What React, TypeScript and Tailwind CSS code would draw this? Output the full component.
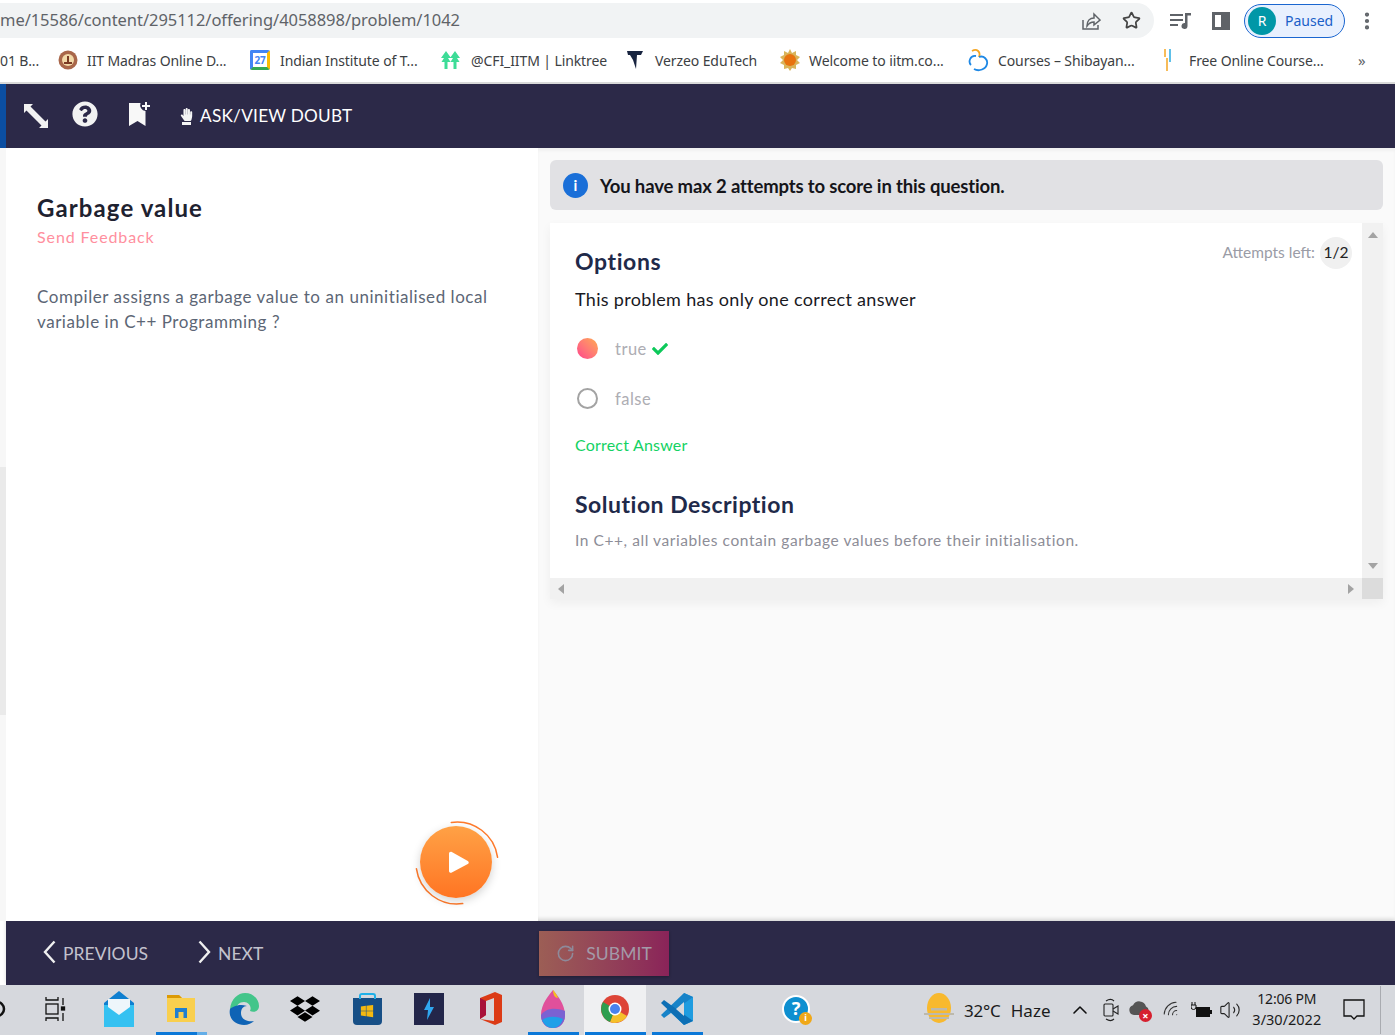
import { ReactNode } from "react";
import { FaCheck, FaHandPaper, FaQuestionCircle, FaDropbox, FaWindows } from "react-icons/fa";
import { Star, ChevronUp, RotateCw, MoreVertical, Volume2, Wifi } from "lucide-react";

const appFont = { fontFamily: "Lato, 'Noto Sans', sans-serif" };

const Bookmark = ({ width, icon, label }: { width: string; icon: ReactNode; label: string }) => (
  <div className={`${width} flex items-center shrink-0`}>
    {icon}
    <span className="whitespace-nowrap">{label}</span>
  </div>
);

const Slot = ({ children, active, bg }: { children: ReactNode; active?: string; bg?: string }) => (
  <div className={`w-[62px] h-[50px] shrink-0 flex flex-col items-center ${bg || ""}`}>
    <div className="flex-1 flex items-center justify-center">{children}</div>
    <div className={`h-[3px] ${active || "w-full"}`} />
  </div>
);

const BrowserBar = () => (
  <div className="h-[84px] bg-white shrink-0 border-b-2 border-[#d9d9d9]" style={{ fontFamily: "'Noto Sans', sans-serif" }}>
    <div className="h-[38px] pt-[3px] flex items-stretch">
      <div className="w-[1154px] bg-[#f1f3f4] rounded-r-full flex items-center justify-between pr-[13px] shrink-0">
        <span className="text-[16.500px] tracking-[-0.05px] text-[#5f6368] whitespace-nowrap">me/15586/content/295112/offering/4058898/problem/1042</span>
        <div className="flex items-center gap-[21px]">
          <svg width="20" height="20" viewBox="0 0 20 20" fill="none" stroke="#5f6368" strokeWidth="1.5">
            <path d="M2 9v9h15v-4" />
            <path d="M6 15c0-5 3-8 7-8V3l6 6-6 5V11c-3 0-5 1-7 4z" />
          </svg>
          <Star size={19} strokeWidth={2.2} color="#444" />
        </div>
      </div>
      <div className="flex items-center ml-[16px]">
        <svg width="22" height="18" viewBox="0 0 22 18" fill="#5f6368">
          <path d="M0 2h13v2H0zM0 7h13v2H0zM0 12h8v2H0zM15 1h6v2.500h-3.500V14a3 3 0 1 1-2.500-3z" />
        </svg>
        <div className="w-[18px] h-[18px] border-[3px] border-r-[9px] border-[#5f6368] ml-[20px]" />
        <div className="w-[101px] h-[34px] ml-[14px] rounded-full border border-[#1a66d0] bg-[#e8f0fe] flex items-center pl-[3px]">
          <div className="w-[28px] h-[28px] rounded-full bg-[#0097a7] text-white text-[14px] flex items-center justify-center">R</div>
          <span className="text-[14px] text-[#1a5fc8] ml-[9px]">Paused</span>
        </div>
        <MoreVertical size={22} strokeWidth={2.6} color="#5f6368" className="ml-[11px]" />
      </div>
    </div>
    <div className="h-[44px] flex items-center text-[14px] tracking-[-0.1px] text-[#3c4043]">
      <Bookmark width="w-[58px]" icon={null} label="01 B..." />
      <Bookmark
        width="w-[192px]"
        icon={
          <svg width="20" height="20" viewBox="0 0 20 20" className="mr-[9px] shrink-0">
            <circle cx="10" cy="10" r="9.500" fill="#a9674a" />
            <circle cx="10" cy="10" r="6" fill="#f2d9a8" />
            <path d="M6 12h8v2H6zM9 6h2v6H9z" fill="#7b3b24" />
          </svg>
        }
        label="IIT Madras Online D..."
      />
      <Bookmark
        width="w-[190px]"
        icon={
          <div className="w-[20px] h-[20px] mr-[10px] shrink-0 rounded-[2px] border-t-[3px] border-l-[3px] border-[#4285f4] border-b-[3px] border-b-[#34a853] border-r-[3px] border-r-[#fbbc04] bg-white text-[10px] font-bold text-[#4285f4] flex items-center justify-center leading-none">
            27
          </div>
        }
        label="Indian Institute of T..."
      />
      <Bookmark
        width="w-[187px]"
        icon={
          <svg width="21" height="20" viewBox="0 0 21 20" fill="#3ddc97" className="mr-[10px] shrink-0">
            <path d="M6 1l5 7H8l2.500 4H7.500V19h-3v-7H1.500L4 8H1zM15 1l5 7h-3l2.500 4h-3V19h-3v-7h-3L13 8h-3z" />
          </svg>
        }
        label="@CFI_IITM | Linktree"
      />
      <Bookmark
        width="w-[153px]"
        icon={
          <svg width="17" height="20" viewBox="0 0 17 20" fill="#182440" className="mr-[11px] shrink-0">
            <path d="M0 1h16l-2 4h-4l-1 14-3-9L3 5H1z" />
          </svg>
        }
        label="Verzeo EduTech"
      />
      <Bookmark
        width="w-[188px]"
        icon={
          <svg width="20" height="22" viewBox="0 0 20 22" className="mr-[9px] shrink-0">
            <path d="M10 0l2 4 4-2 0 4 4 2-3 3 3 3-4 2v4l-4-1-2 3-2-3-4 1v-4l-4-2 3-3-3-3 4-2 0-4 4 2z" fill="#d9b45a" />
            <circle cx="10" cy="11" r="6" fill="#e8730f" />
          </svg>
        }
        label="Welcome to iitm.co..."
      />
      <Bookmark
        width="w-[194px]"
        icon={
          <svg width="21" height="24" viewBox="0 0 21 24" fill="none" strokeWidth="1.800" className="mr-[9px] shrink-0">
            <path d="M4 3c5-3 9 1 7 6" stroke="#f5a623" />
            <path d="M11 9c5-2 9 3 8 7-1 5-8 8-13 5" stroke="#1e88e5" />
            <path d="M8 8c-6-1-8 6-5 9" stroke="#1e88e5" />
          </svg>
        }
        label="Courses – Shibayan..."
      />
      <Bookmark
        width="w-[201px]"
        icon={
          <svg width="13" height="24" viewBox="0 0 13 24" fill="none" strokeWidth="1.500" className="mr-[14px] shrink-0">
            <path d="M3 1v8M5 10v13" stroke="#f5a623" />
            <path d="M8 1v13" stroke="#29abe2" />
          </svg>
        }
        label="Free Online Course..."
      />
      <span className="text-[15px] text-[#5f6368] -ml-[5px]">»</span>
    </div>
  </div>
);

const NavBar = () => (
  <div className="h-[64px] bg-[#2c2948] shrink-0 flex items-center border-l-[6px] border-[#0b4ea2] text-white" style={appFont}>
    <svg width="26" height="26" viewBox="0 0 26 26" fill="#f2f2f2" className="ml-[17px] shrink-0">
      <path d="M1 1h9L7.500 3.500 22.500 18.500 25 16v9h-9l2.500-2.500L3.500 7.500 1 10z" />
    </svg>
    <FaQuestionCircle size={26} color="#f2f2f2" className="ml-[23px] -mt-[4px] shrink-0" />
    <svg width="22" height="24" viewBox="0 0 22 24" fill="#f8f8f8" className="ml-[30px] -mt-[4px] shrink-0">
      <path d="M1 1h11.500a6 6 0 0 0 5 8V24l-8-5-8.500 5z" />
      <path d="M17 0h2v3h3v2h-3v3h-2V5h-3V3h3z" />
    </svg>
    <div className="ml-[30px] flex flex-col items-center shrink-0">
      <FaHandPaper size={13} color="#f5f5f5" />
      <div className="w-[9px] h-[3px] bg-[#f5f5f5] mt-[1px]" />
    </div>
    <span className="text-[17.200px] ml-[7px] tracking-[0.25px] whitespace-nowrap">ASK/VIEW DOUBT</span>
  </div>
);

const PlayButton = () => (
  <div className="absolute left-[415px] top-[673px] w-[84px] h-[84px]">
    <svg width="84" height="84" viewBox="0 0 84 84" fill="none" className="absolute inset-0" strokeWidth="1.500" strokeLinecap="round" stroke="#ff7a2b">
      <path d="M42 1a41 41 0 0 1 41 41" transform="rotate(-8 42 42)" />
      <path d="M42 83A41 41 0 0 1 1 42" transform="rotate(-8 42 42)" />
    </svg>
    <div className="absolute left-[5px] top-[5px] w-[72px] h-[72px] rounded-full bg-gradient-to-b from-[#ffa145] to-[#ff7422] shadow-[0_3px_10px_rgba(0,0,0,0.18)] flex items-center justify-center">
      <svg width="24" height="24" viewBox="0 0 24 24" fill="#fff" className="ml-[3px]">
        <path d="M3 3.500c0-1.500 1.500-2.300 2.800-1.600l16 9c1.300.7 1.300 2.500 0 3.200l-16 8.500C4.500 23.300 3 22.500 3 21z" />
      </svg>
    </div>
  </div>
);

const QuestionPanel = () => (
  <div className="w-[538px] shrink-0 flex relative bg-white">
    <div className="w-[6px] shrink-0 flex flex-col">
      <div className="h-[319px] bg-[#f7f7f7]" />
      <div className="h-[248px] bg-[#eaeaea]" />
      <div className="flex-1 bg-[#f7f7f7]" />
    </div>
    <div className="pl-[31px] pr-[30px] pt-[45px] flex-1">
      <h1 className="text-[24px] leading-[30px] font-bold tracking-[1.1px] text-[#1e2230]">Garbage value</h1>
      <a className="block text-[16px] leading-[20px] mt-[4px] tracking-[0.9px] text-[#ff8f9e]">Send Feedback</a>
      <p className="text-[17px] leading-[25px] text-[#5c6675] mt-[37px] tracking-[0.55px]">
        Compiler assigns a garbage value to an uninitialised local variable in C++ Programming ?
      </p>
    </div>
    <PlayButton />
  </div>
);

const AnswerPanel = () => (
  <div className="flex-1 bg-[#fafafa] pt-[12px] pl-[12px] pr-[12px] shadow-[inset_0_3px_3px_rgba(0,0,0,0.04)]">
    <div className="h-[50px] rounded-[6px] bg-[#e1e1e4] flex items-center pl-[13px]">
      <div className="w-[25px] h-[25px] rounded-full bg-[#1a6fd8] text-white text-[15px] font-bold flex items-center justify-center">i</div>
      <span className="text-[18.500px] font-bold tracking-[-0.15px] text-[#15151a] ml-[12px] pt-[3px]">You have max 2 attempts to score in this question.</span>
    </div>
    <div className="mt-[13px] h-[376px] flex flex-col bg-[#f1f1f1] shadow-[0_4px_10px_rgba(0,0,0,0.05)]">
      <div className="h-[355px] flex">
        <div className="flex-1 bg-white relative pl-[25px] pt-[23px]">
          <div className="absolute right-[10px] top-[14px] flex items-center gap-[5px]">
            <span className="text-[15.500px] text-[#9a9ca6]">Attempts left:</span>
            <span className="w-[32px] h-[32px] rounded-full bg-[#f0f0f0] text-[15.500px] text-[#222] flex items-center justify-center">1/2</span>
          </div>
          <h2 className="text-[23px] leading-[30px] font-bold tracking-[0.6px] text-[#1f2a4a]">Options</h2>
          <p className="text-[18px] leading-[24px] mt-[11px] tracking-[0.32px] text-[#1a1a1f]">This problem has only one correct answer</p>
          <div className="flex items-center mt-[26px] h-[24px]">
            <div className="w-[21px] h-[21px] ml-[2px] -mt-[2px] rounded-full bg-gradient-to-bl from-[#ffa94d] to-[#ff3d8b]" />
            <span className="text-[16.500px] tracking-[0.5px] text-[#adadb3] ml-[17px]">true</span>
            <FaCheck size={16} color="#0cc95a" className="ml-[5px]" />
          </div>
          <div className="flex items-center mt-[26px] h-[24px]">
            <div className="w-[21px] h-[21px] ml-[2px] -mt-[2px] rounded-full border-2 border-[#a3a3a3]" />
            <span className="text-[16.500px] tracking-[0.5px] text-[#adadb3] ml-[17px]">false</span>
          </div>
          <p className="text-[16px] leading-[22px] mt-[23px] tracking-[0.2px] text-[#14d263]">Correct Answer</p>
          <h2 className="text-[23px] leading-[30px] font-bold tracking-[0.5px] text-[#1f2a4a] mt-[33px]">Solution Description</h2>
          <p className="text-[15.500px] leading-[22px] mt-[10px] tracking-[0.57px] text-[#8d8d97]">In C++, all variables contain garbage values before their initialisation.</p>
        </div>
        <div className="w-[21px] flex flex-col items-center justify-between py-[9px]">
          <div className="w-0 h-0 border-x-[5px] border-x-transparent border-b-[6px] border-b-[#a3a3a3]" />
          <div className="w-0 h-0 border-x-[5px] border-x-transparent border-t-[6px] border-t-[#a3a3a3]" />
        </div>
      </div>
      <div className="h-[21px] flex">
        <div className="flex-1 flex items-center justify-between px-[8px]">
          <div className="w-0 h-0 border-y-[5px] border-y-transparent border-r-[6px] border-r-[#a3a3a3]" />
          <div className="w-0 h-0 border-y-[5px] border-y-transparent border-l-[6px] border-l-[#a3a3a3]" />
        </div>
        <div className="w-[21px] bg-[#dcdcdc]" />
      </div>
    </div>
  </div>
);

const FooterBar = () => (
  <div className="h-[64px] shrink-0 bg-white pl-[6px]" style={appFont}>
    <div className="h-full bg-[#2c2948] flex items-center shadow-[0_-2px_4px_rgba(0,0,0,0.15)]">
      <svg width="13" height="24" viewBox="0 0 13 24" fill="none" stroke="#f0f0f0" strokeWidth="2.400" className="ml-[37px] -mt-[2px] shrink-0">
        <path d="M11.500 1.500L2 12l9.500 10.500" />
      </svg>
      <span className="text-[17.500px] text-[#c3c2cd] ml-[7px] mt-[2px] tracking-[0.05px]">PREVIOUS</span>
      <svg width="13" height="24" viewBox="0 0 13 24" fill="none" stroke="#f0f0f0" strokeWidth="2.400" className="ml-[50px] -mt-[2px] shrink-0">
        <path d="M1.500 1.500L11 12 1.500 22.500" />
      </svg>
      <span className="text-[17.500px] text-[#c3c2cd] ml-[7px] mt-[2px]">NEXT</span>
      <div className="w-[130px] h-[45px] ml-[276px] mt-[1px] bg-gradient-to-r from-[#9c5e55] to-[#8a2359] flex items-center shadow-[0_1px_3px_rgba(0,0,0,0.3)]">
        <RotateCw size={19} strokeWidth={2} color="#8e8a9a" className="ml-[17px]" />
        <span className="text-[17.500px] text-[#a39aa8] ml-[11px] mt-[2px] tracking-[0.1px]">SUBMIT</span>
      </div>
    </div>
  </div>
);

const TaskBar = () => (
  <div className="h-[50px] shrink-0 bg-[#d6d8dd] flex items-center text-[#1b1b1b]" style={{ fontFamily: "'Noto Sans', sans-serif" }}>
    <svg width="6" height="18" viewBox="0 0 6 18" fill="none" stroke="#111" strokeWidth="2.500" className="shrink-0 mb-[3px]">
      <circle cx="-3" cy="9" r="7" />
    </svg>
    <div className="w-[20px] shrink-0" />
    <Slot>
      <svg width="22" height="26" viewBox="0 0 22 26" fill="none" stroke="#111" strokeWidth="1.300" className="-ml-[4px]">
        <path d="M2 1v3h12V1M2 25v-3h12v3" />
        <rect x="2" y="8" width="12" height="10" />
        <path d="M19 2v7M19 17v8" />
        <rect x="17.500" y="11" width="3" height="3" fill="#111" />
      </svg>
    </Slot>
    <Slot>
      <svg width="30" height="36" viewBox="0 0 30 36">
        <path d="M0 12L15 0l15 12v24H0z" fill="#0f7fd0" />
        <path d="M0 14h30v22H0z" fill="#35c1f1" />
        <path d="M4 8h22v8l-11 8-11-8z" fill="#eef6fb" />
      </svg>
    </Slot>
    <Slot active="w-[51px] bg-gradient-to-r from-[#0b78d8] from-[80%] to-[#64aee8] to-[80%]">
      <svg width="30" height="30" viewBox="0 0 30 30">
        <path d="M1 1h12l3 3h13v24H1z" fill="#f9cf4e" />
        <path d="M1 1h12l3 3H1z" fill="#dc9a05" />
        <path d="M9 24V14h12v10h-3.500v-6h-5v6z" fill="#1f7fd0" />
      </svg>
    </Slot>
    <Slot>
      <svg width="31" height="32" viewBox="0 0 31 32">
        <path d="M2 16C3 6 10 0 17 0c8 0 14 6 14 13 0 5-5 7-9 5 2-4-1-9-6-9-5 0-7 3-8 7z" fill="#43c58a" />
        <path d="M2 16c-2 9 5 16 14 16 4 0 8-2 10-4-6 1-13-1-13-8 0-4 2-7 6-7-8-3-15 1-17 3z" fill="#0f63b5" />
      </svg>
    </Slot>
    <Slot>
      <FaDropbox size={30} color="#000" />
    </Slot>
    <Slot>
      <div className="relative w-[29px] h-[27px] mt-[5px] rounded-b-[4px] bg-[#174f86] flex items-center justify-center">
        <div className="absolute -top-[5px] left-[6px] w-[17px] h-[6px] border-2 border-b-0 border-[#1fb0e8] rounded-t-[3px]" />
        <FaWindows size={14} color="#f5b90f" />
      </div>
    </Slot>
    <Slot>
      <div className="w-[30px] h-[32px] bg-[#23264a] flex items-center justify-center">
        <svg width="10" height="22" viewBox="0 0 10 22" fill="#2fa7f0">
          <path d="M6 0L0 12h4l-1 10 7-13H6z" />
        </svg>
      </div>
    </Slot>
    <Slot>
      <svg width="24" height="33" viewBox="0 0 24 33">
        <path d="M1 6L16 0l7 3v27l-7 3L1 27l14 2V6l-8 3v14l-6 4z" fill="#dc3b16" />
        <path d="M1 27V6l6 3v14z" fill="#a8123a" />
      </svg>
    </Slot>
    <Slot active="w-[51px] bg-[#0b78d8]">
      <svg width="24" height="38" viewBox="0 0 24 38">
        <path d="M12 0c4 5 12 14 12 25 0 8-5 13-12 13S0 33 0 25C0 14 8 5 12 0z" fill="#e0509b" />
        <path d="M0 25c5-7 14-8 24-4 0 1 0 3 0 4 0 8-5 13-12 13S0 33 0 25z" fill="#7b62d2" />
        <path d="M1 30c6-4 14-4 21-1-2 6-6 9-10 9-5 0-9-3-11-8z" fill="#1fa0e8" />
        <path d="M12 0c2 2 4 5 5 8-3 0-5-3-5-8z" fill="#f6c21c" />
      </svg>
    </Slot>
    <Slot active="w-[61px] bg-[#0b78d8]" bg="bg-[#eff0f2]">
      <svg width="28" height="28" viewBox="0 0 28 28">
        <circle cx="14" cy="14" r="14" fill="#dd4437" />
        <path d="M14 14L26 21A14 14 0 0 1 9 27z" fill="#f5c02b" />
        <path d="M14 14L9 27A14 14 0 0 1 2 7z" fill="#2f9e4f" />
        <circle cx="14" cy="14" r="6.500" fill="#fff" />
        <circle cx="14" cy="14" r="5" fill="#4a82ee" />
      </svg>
    </Slot>
    <Slot active="w-[51px] bg-[#0b78d8]">
      <svg width="32" height="32" viewBox="0 0 32 32">
        <path d="M23 0l9 4v24l-9 4-15-14 15-11z" fill="#1f9ce0" />
        <path d="M23 0L0 22l3 3L32 4z" fill="#1783c8" />
        <path d="M0 10l3-3 29 21-9 4z" fill="#0d6fb5" />
        <path d="M23 9v14l-8-7z" fill="#d6d8dd" />
      </svg>
    </Slot>
    <div className="ml-[74px] relative w-[30px] h-[30px] shrink-0 mb-[1px]">
      <div className="w-[28px] h-[28px] rounded-full bg-[#0e8fd0] border-[2px] border-white text-white text-[18px] font-bold flex items-center justify-center">?</div>
      <div className="absolute right-0 bottom-0 w-[13px] h-[13px] rounded-full bg-[#f0a818] text-white text-[9px] font-bold flex items-center justify-center">i</div>
    </div>
    <svg width="30" height="32" viewBox="0 0 30 32" className="ml-[112px] shrink-0 mb-[3px]">
      <ellipse cx="15" cy="15" rx="12" ry="15" fill="#f8b92e" />
      <path d="M0 20h30v2H0zM7 15h16v2.500H7zM5 24h20v2H5z" fill="#bdb9ac" />
    </svg>
    <span className="text-[17px] tracking-[-0.2px] ml-[10px] mt-[2px] whitespace-nowrap">32°C</span>
    <span className="text-[17px] tracking-[0.1px] ml-[10px] mt-[2px] whitespace-nowrap">Haze</span>
    <ChevronUp size={24} strokeWidth={1.6} color="#111" className="ml-[17px] shrink-0" />
    <svg width="16" height="24" viewBox="0 0 16 24" fill="none" stroke="#222" strokeWidth="1.100" className="ml-[11px] shrink-0">
      <path d="M3 3c3-2 6-2 8 0M3 21c3 2 6 2 8 0" />
      <rect x="1" y="6" width="9" height="12" rx="1" />
      <path d="M10 11l5-3v8l-5-3" />
    </svg>
    <div className="relative w-[22px] h-[22px] ml-[10px] shrink-0">
      <svg width="21" height="16" viewBox="0 0 21 16" fill="#555" className="absolute left-0 top-0">
        <path d="M5 16a5 5 0 0 1-1-9.800 7 7 0 0 1 13 1.300A4.500 4.500 0 0 1 16 16z" />
      </svg>
      <div className="absolute -right-[1px] -bottom-[1px] w-[13px] h-[13px] rounded-full bg-[#d6202f] text-white text-[11px] font-bold leading-none flex items-center justify-center">×</div>
    </div>
    <Wifi size={20} strokeWidth={1.3} color="#333" className="ml-[11px] shrink-0 -rotate-45" />
    <svg width="21" height="16" viewBox="0 0 21 16" fill="none" className="ml-[9px] shrink-0">
      <path d="M1 0v3M4 0v3M0 3h5v2a2.500 2.500 0 0 1-5 0z" stroke="#111" strokeWidth="1" />
      <rect x="5" y="5" width="14" height="10" fill="#111" />
      <rect x="19" y="8" width="2" height="4" fill="#111" />
    </svg>
    <Volume2 size={22} strokeWidth={1.2} color="#222" className="ml-[7px] shrink-0" />
    <div className="w-[72px] ml-[10px] mb-[2px] shrink-0 flex flex-col items-center text-[14px] leading-[21px] tracking-[-0.2px]">
      <span>12:06 PM</span>
      <span className="whitespace-nowrap text-[14.500px] tracking-[0px]">3/30/2022</span>
    </div>
    <svg width="22" height="22" viewBox="0 0 22 22" fill="none" stroke="#111" strokeWidth="1.300" className="ml-[20px] shrink-0">
      <path d="M1 1h20v16h-7l-3 3-3-3H1z" />
    </svg>
    <div className="w-px h-[48px] bg-[#a9abb0] ml-[15px] shrink-0" />
  </div>
);

const App = () => {
  return (
    <div className="w-[1395px] h-[1035px] overflow-hidden flex flex-col">
      <BrowserBar />
      <NavBar />
      <div className="flex-1 flex min-h-0" style={appFont}>
        <QuestionPanel />
        <AnswerPanel />
      </div>
      <FooterBar />
      <TaskBar />
    </div>
  );
};

export default App;
